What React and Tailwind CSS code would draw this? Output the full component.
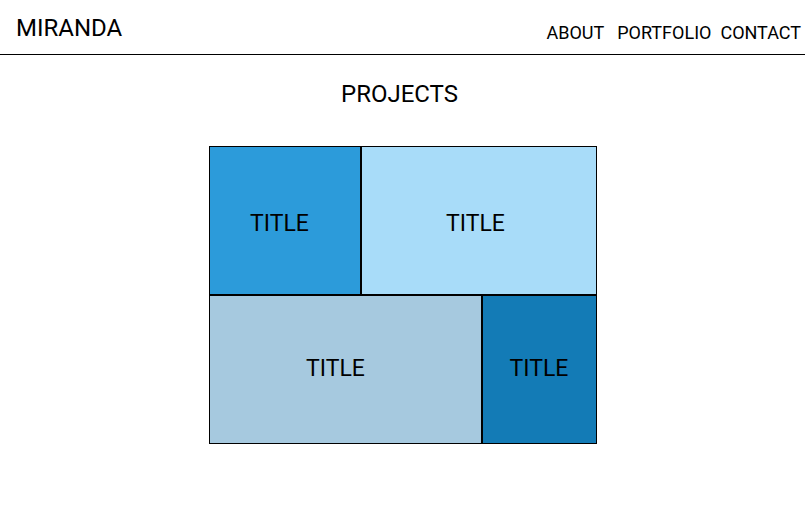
import React from "react";

const rows = [
  {
    pad: "pt-[8px]",
    cells: [
      { w: "w-[152px]", bg: "bg-[#2c9bda]", pad: "pr-[10px]" },
      { w: "w-[236px]", bg: "bg-[#a8dcf9]", pad: "pr-[6px]" },
    ],
  },
  {
    pad: "pb-0",
    cells: [
      { w: "w-[273px]", bg: "bg-[#a6c9df]", pad: "pr-[19px]" },
      { w: "w-[115px]", bg: "bg-[#137bb6]", pad: "pr-0" },
    ],
  },
];

export default function App() {
  return (
    <div className="min-h-screen bg-white text-black font-['Roboto',sans-serif]">
      <header className="h-[55px] border-b border-black flex justify-between">
        <div className="ml-[16px] mt-[14px] text-[24px] leading-[28px]">MIRANDA</div>
        <nav className="mt-[22px] mr-[4px] flex text-[18px] leading-[21px]">
          <a className="mr-[13px]">ABOUT</a>
          <a className="mr-[9px]">PORTFOLIO</a>
          <a>CONTACT</a>
        </nav>
      </header>

      <main className="pt-[25px]">
        <h1 className="text-center text-[24px] leading-[28px] pr-[6px]">PROJECTS</h1>
        <div className="w-[388px] mx-auto mt-[38px]">
          {rows.map((row, i) => (
            <div key={i} className="flex">
              {row.cells.map((c, j) => (
                <div
                  key={j}
                  className={`${c.w} ${c.bg} ${c.pad} ${row.pad} h-[149px] border border-black flex items-center justify-center text-[23px]`}
                >
                  TITLE
                </div>
              ))}
            </div>
          ))}
        </div>
      </main>
    </div>
  );
}
